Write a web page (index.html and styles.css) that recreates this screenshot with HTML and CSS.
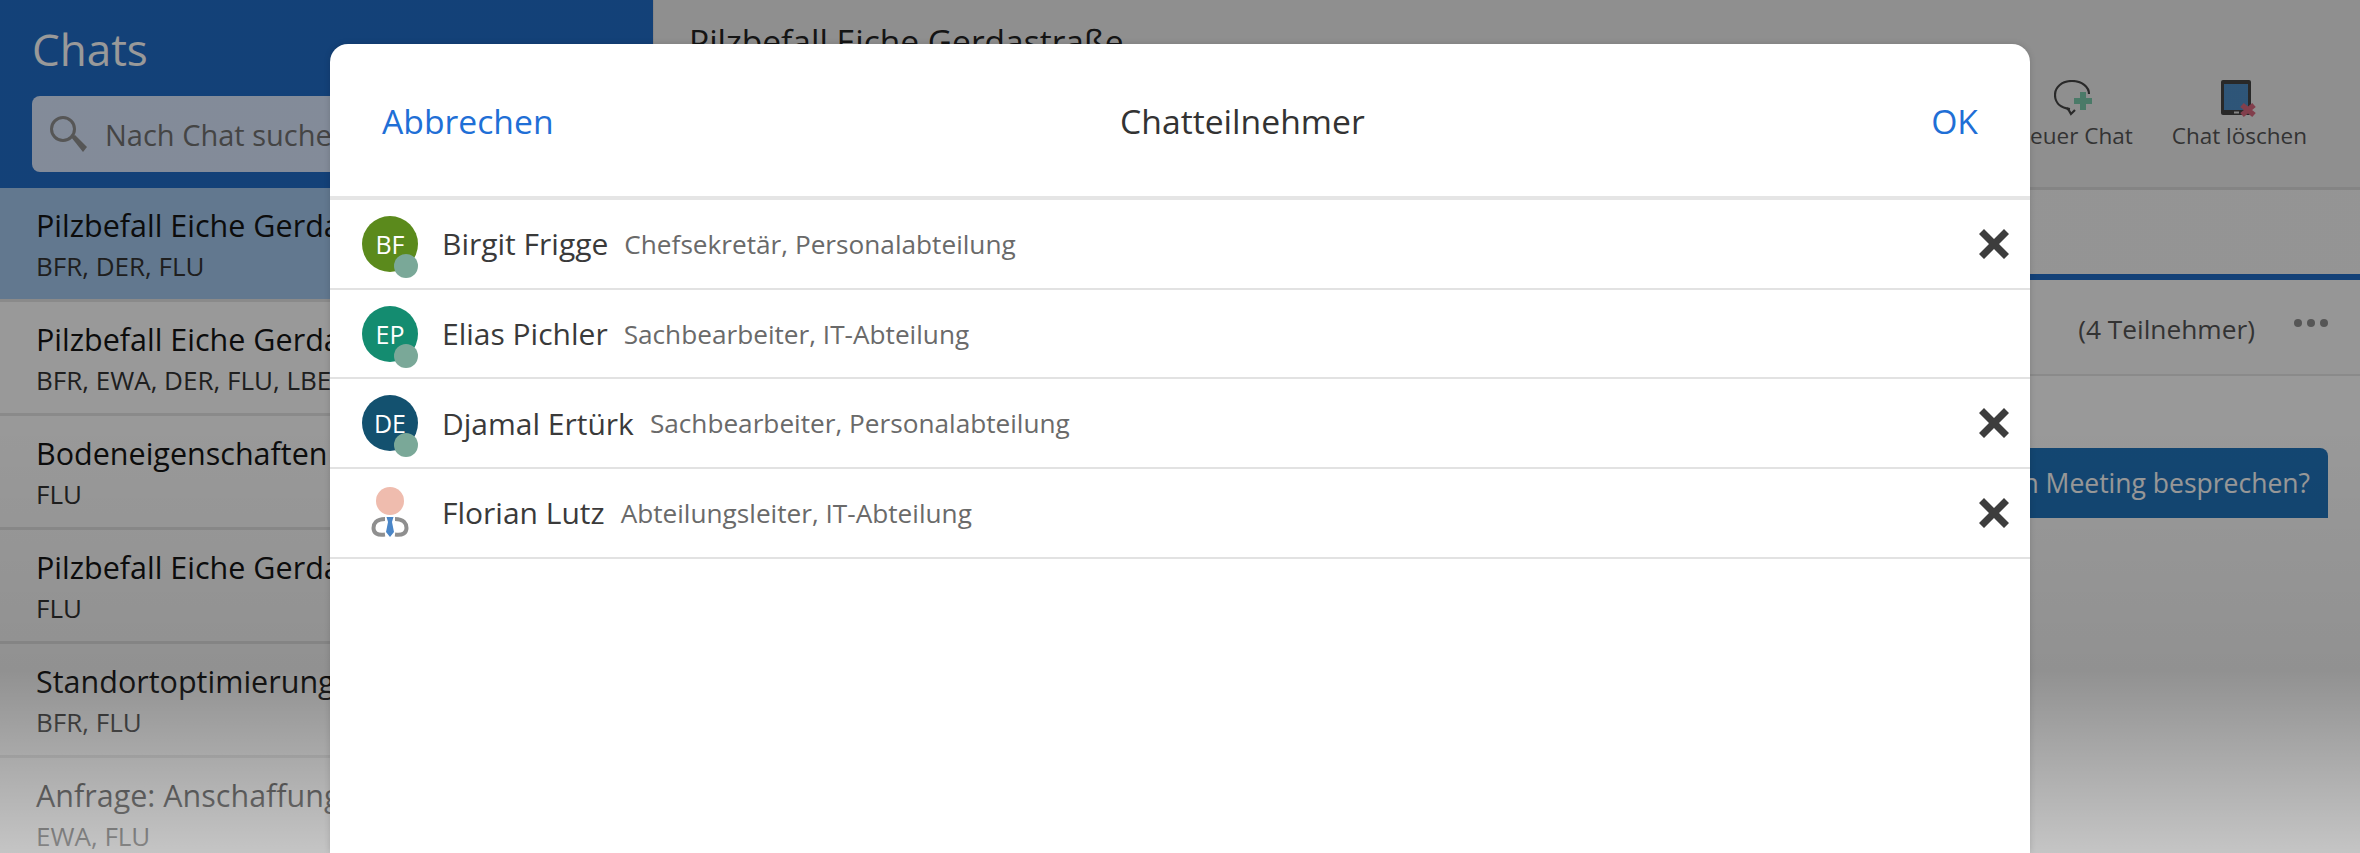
FILE: index.html
```html
<!DOCTYPE html>
<html>
	<head>
		<meta charset="utf-8">
		<title>Chats</title>
		<link rel="stylesheet" href="styles.css">
	</head>
	<body>
		<div class="app">
			<div class="sidebar">
				<div class="side_head">
					<p class="side_title">Chats</p>
					<div class="search">
						<svg class="search_icon" viewBox="0 0 38 36" width="38" height="36">
							<circle cx="14" cy="13" r="11.5" fill="none" stroke="#8f8f8f" stroke-width="3"/>
							<path d="M22 21 L26 19 L38 31 L34 36 Z" fill="#8f8f8f"/>
						</svg>
						<span>Nach Chat suchen</span>
					</div>
				</div>
				<div class="chat chat_active">
					<p class="chat_name">Pilzbefall Eiche Gerdastraße</p>
					<p class="chat_people">BFR, DER, FLU</p>
				</div>
				<div class="chat">
					<p class="chat_name">Pilzbefall Eiche Gerdastraße</p>
					<p class="chat_people">BFR, EWA, DER, FLU, LBE</p>
				</div>
				<div class="chat">
					<p class="chat_name">Bodeneigenschaften Stadtpark</p>
					<p class="chat_people">FLU</p>
				</div>
				<div class="chat">
					<p class="chat_name">Pilzbefall Eiche Gerdastraße</p>
					<p class="chat_people">FLU</p>
				</div>
				<div class="chat">
					<p class="chat_name">Standortoptimierung Linden</p>
					<p class="chat_people">BFR, FLU</p>
				</div>
				<div class="chat">
					<p class="chat_name">Anfrage: Anschaffung Hubsteiger</p>
					<p class="chat_people">EWA, FLU</p>
				</div>
			</div>

			<div class="main">
				<div class="main_head">
					<p class="main_title">Pilzbefall Eiche Gerdastraße</p>
					<div class="tools">
						<div class="tool">
							<svg viewBox="0 0 38 38" width="38" height="38">
								<path d="M16 29 C7 28 1 23 1 15 C1 7 8 1 18 1 C28 1 35 7 35 14" fill="none" stroke="#454545" stroke-width="2.2"/>
								<path d="M13 28 C15 30 16 32 17 34 L21 30" fill="none" stroke="#454545" stroke-width="2.2"/>
								<path d="M26 12 H32 V18 H38 V24 H32 V30 H26 V24 H20 V18 H26 Z" fill="#7bcbad"/>
							</svg>
							<span>Neuer Chat</span>
						</div>
						<div class="tool">
							<svg viewBox="0 0 36 38" width="36" height="38">
								<rect x="0" y="0" width="30" height="35" rx="2" fill="#444444"/>
								<rect x="3" y="4" width="24" height="26" fill="#4d8ec8"/>
								<rect x="13" y="31.5" width="5" height="2" fill="#dddddd"/>
								<path d="M21 25 L33 35 M33 25 L21 35" stroke="#d8697f" stroke-width="5.5"/>
							</svg>
							<span>Chat löschen</span>
						</div>
					</div>
				</div>
				<div class="tabs"></div>
				<div class="people_row">
					<span class="people_count">(4 Teilnehmer)</span>
					<span class="dots"><i></i><i></i><i></i></span>
				</div>
				<div class="messages">
					<div class="bubble">Sollen wir das im nächsten Meeting besprechen?</div>
				</div>
			</div>
		</div>

		<div class="backdrop"></div>

		<div class="dialog">
			<div class="dialog_head">
				<a class="dialog_btn">Abbrechen</a>
				<span class="dialog_title">Chatteilnehmer</span>
				<a class="dialog_btn">OK</a>
			</div>
			<div class="person">
				<div class="avatar green">BF<i class="presence"></i></div>
				<span class="person_name">Birgit Frigge</span>
				<span class="person_role">Chefsekretär, Personalabteilung</span>
				<svg class="remove" viewBox="0 0 30 30" width="30" height="30"><path d="M5 0 L15 10 L25 0 L30 5 L20 15 L30 25 L25 30 L15 20 L5 30 L0 25 L10 15 L0 5 Z"/></svg>
			</div>
			<div class="person">
				<div class="avatar teal">EP<i class="presence"></i></div>
				<span class="person_name">Elias Pichler</span>
				<span class="person_role">Sachbearbeiter, IT-Abteilung</span>
			</div>
			<div class="person">
				<div class="avatar navy">DE<i class="presence"></i></div>
				<span class="person_name">Djamal Ertürk</span>
				<span class="person_role">Sachbearbeiter, Personalabteilung</span>
				<svg class="remove" viewBox="0 0 30 30" width="30" height="30"><path d="M5 0 L15 10 L25 0 L30 5 L20 15 L30 25 L25 30 L15 20 L5 30 L0 25 L10 15 L0 5 Z"/></svg>
			</div>
			<div class="person">
				<svg class="avatar_pic" viewBox="0 0 56 56" width="56" height="56">
					<circle cx="28" cy="16" r="14" fill="#efbcae"/>
					<path d="M23 34 C14 34 11.5 39 11.5 43 C11.5 48 15 50.5 23 49.5" fill="none" stroke="#8f8f8f" stroke-width="4"/>
					<path d="M33 34 C42 34 44.5 39 44.5 43 C44.5 48 41 50.5 33 49.5" fill="none" stroke="#8f8f8f" stroke-width="4"/>
					<path d="M24.5 32 H31.5 L30 37 L32 47 L28 52 L24 47 L26 37 Z" fill="#4a86c8"/>
				</svg>
				<span class="person_name">Florian Lutz</span>
				<span class="person_role">Abteilungsleiter, IT-Abteilung</span>
				<svg class="remove" viewBox="0 0 30 30" width="30" height="30"><path d="M5 0 L15 10 L25 0 L30 5 L20 15 L30 25 L25 30 L15 20 L5 30 L0 25 L10 15 L0 5 Z"/></svg>
			</div>
		</div>
	</body>
</html>
```

FILE: styles.css
```css
* {
	padding:0px;
	margin:0px;
	box-sizing:border-box;

	font-family:"Open Sans", "Noto Sans", sans-serif;
}

body {
	overflow:hidden;
	height:853px;
	background:#ffffff;
}

.app {
	display:flex;
	height:853px;
}

/* left column */
.sidebar {
	overflow:hidden;
	flex:0 0 654px;
	background:#ffffff;
	border-right:1px solid #e0e0e0;
}
.side_head {
	height:188px;
	padding:24px 32px 0px 32px;
	background:#206cc8;
}
.side_title {
	font-size:44px;
	line-height:50px;
	color:#ffffff;
}
.search {
	display:flex;
	align-items:center;
	gap:18px;

	margin-top:22px;
	padding-left:17px;
	height:76px;

	background:#dae8ff;
	border-radius:8px;

	font-size:29px;
	color:#727272;
}
.chat {
	height:114px;
	padding:16px 36px 0px 36px;
	border-bottom:3px solid #e6e6e6;
	white-space:nowrap;
}
.chat_active {
	background:#a3c8ee;
}
.chat_name {
	font-size:30.5px;
	line-height:42px;
	color:#141414;
}
.chat_people {
	font-size:26px;
	line-height:40px;
	color:#333333;
}

/* right column */
.main {
	flex:1;
	min-width:0;
	background:#ffffff;
}
.main_head {
	height:190px;
	padding:19px 53px 0px 35px;
	background:#eeeeee;
	border-bottom:3px solid #dcdcdc;
}
.main_title {
	font-size:33.5px;
	line-height:44px;
	color:#222222;
	white-space:nowrap;
}
.tools {
	display:flex;
	justify-content:flex-end;
	gap:39px;
	margin-top:17px;
}
.tool {
	display:flex;
	flex-direction:column;
	align-items:center;
	gap:2px;

	font-size:22.5px;
	line-height:32px;
	color:#555555;
}
.tabs {
	height:90px;
	background:#f7f7f7;
	border-bottom:6px solid #206cc8;
}
.people_row {
	display:flex;
	justify-content:flex-end;
	align-items:center;
	gap:39px;

	padding:0px 32px 0px 0px;
	height:96px;

	background:#fafafa;
	border-bottom:2px solid #e6e6e6;

	font-size:26.3px;
	color:#555555;
}
.people_count {
	margin-top:4px;
}
.dots {
	display:flex;
	gap:5px;
	margin-bottom:8px;
}
.dots i {
	width:8px;
	height:8px;
	background:#8f8f8f;
	border-radius:50%;
}
.messages {
	display:flex;
	justify-content:flex-end;
	padding:72px 32px 0px 0px;
}
.bubble {
	padding:0px 18px;
	height:70px;

	background:#2075be;
	border-radius:8px 8px 0px 0px;

	font-size:26.5px;
	line-height:70px;
	color:#ffffff;
	white-space:nowrap;
}

/* dim layer and dialog */
.backdrop {
	position:absolute;
	left:0px;
	top:0px;
	width:100%;
	height:853px;
	background:linear-gradient(rgba(255,255,255,0) 670px, rgba(255,255,255,0.47) 853px),
		linear-gradient(rgba(0,0,0,0.4) 420px, rgba(0,0,0,0.43) 670px);
}
.dialog {
	position:absolute;
	left:330px;
	right:330px;
	top:44px;
	bottom:0px;

	background:#ffffff;
	border-radius:18px 18px 0px 0px;
	box-shadow:0px 0px 6px rgba(0,0,0,0.15);
}
.dialog_head {
	display:flex;
	justify-content:space-between;
	align-items:center;

	padding:2px 52px 0px 52px;
	height:156px;

	border-bottom:4px solid #e5e5e5;

	font-size:33.7px;
}
.dialog_btn {
	color:#1f6fd6;
}
.dialog_title {
	color:#333333;
}
.person {
	display:flex;
	align-items:center;

	padding:0px 21px 0px 32px;
	height:89.7px;

	border-bottom:2px solid #e2e2e2;
}
.avatar {
	position:relative;
	flex:0 0 56px;
	height:56px;

	border-radius:50%;

	font-size:25px;
	line-height:56px;
	text-align:center;
	color:#ffffff;
}
.avatar_pic {
	flex:0 0 56px;
}
.green {
	background:#5b8a1c;
}
.teal {
	background:#148c70;
}
.navy {
	background:#13516f;
}
.presence {
	position:absolute;
	right:0px;
	bottom:-6px;
	width:24px;
	height:24px;
	background:#7aa898;
	border-radius:50%;
}
.person_name {
	margin-left:24px;
	font-size:30px;
	color:#3a3a3a;
}
.person_role {
	margin-left:16px;
	font-size:26.2px;
	color:#6a6a6a;
}
.remove {
	margin-left:auto;
	fill:#3d3d3d;
}
```
